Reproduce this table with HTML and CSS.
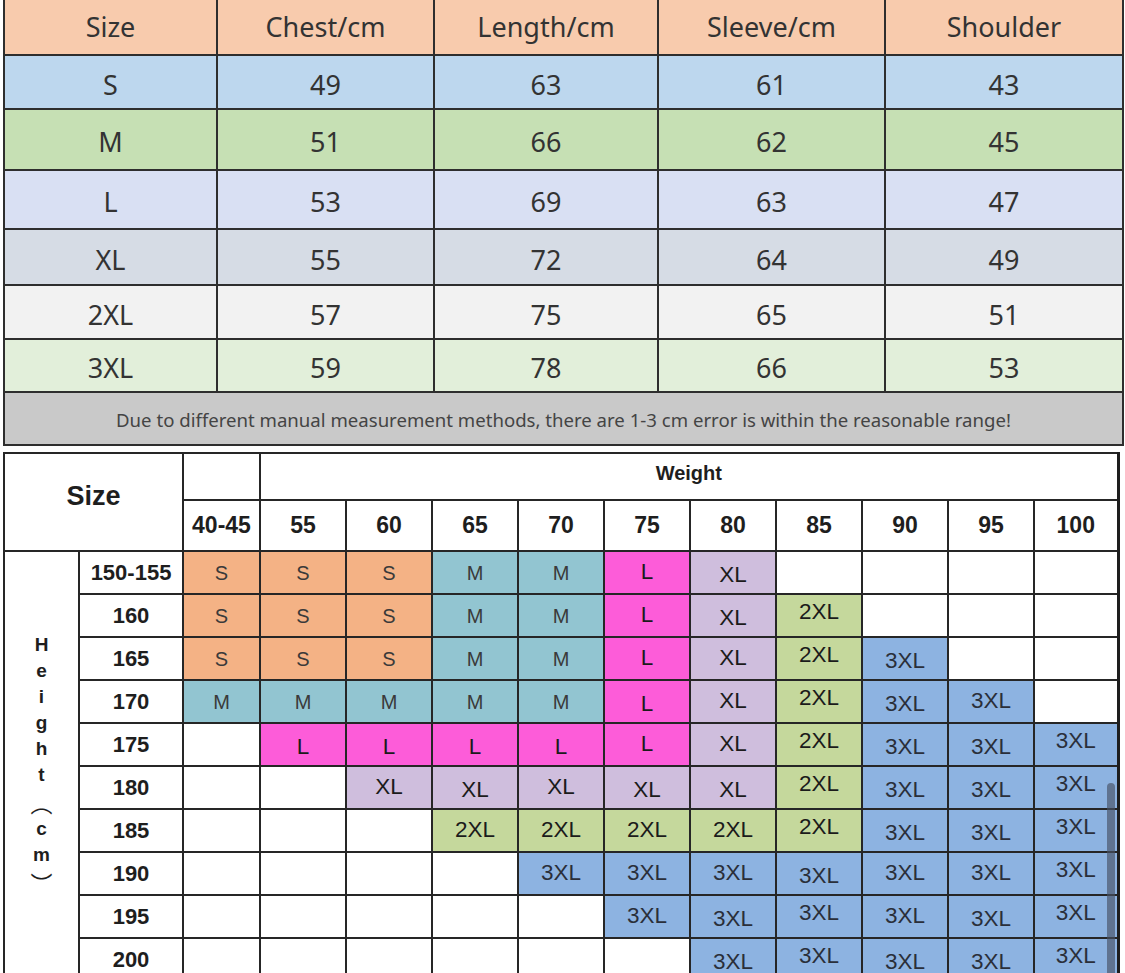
FILE: index.html
```html
<!DOCTYPE html>
<html lang="en">
<head>
<meta charset="utf-8">
<title>Size chart</title>
<link rel="stylesheet" href="styles.css">
</head>
<body>
<div class="page">
  <table class="spec">
    <colgroup>
      <col class="sc1"><col class="sc2"><col class="sc3"><col class="sc4"><col class="sc5">
    </colgroup>
    <tr class="row-head"><th>Size</th><th>Chest/cm</th><th>Length/cm</th><th>Sleeve/cm</th><th>Shoulder</th></tr>
    <tr class="row-s"><td>S</td><td>49</td><td>63</td><td>61</td><td>43</td></tr>
    <tr class="row-m"><td>M</td><td>51</td><td>66</td><td>62</td><td>45</td></tr>
    <tr class="row-l"><td>L</td><td>53</td><td>69</td><td>63</td><td>47</td></tr>
    <tr class="row-xl"><td>XL</td><td>55</td><td>72</td><td>64</td><td>49</td></tr>
    <tr class="row-2xl"><td>2XL</td><td>57</td><td>75</td><td>65</td><td>51</td></tr>
    <tr class="row-3xl"><td>3XL</td><td>59</td><td>78</td><td>66</td><td>53</td></tr>
    <tr class="row-note"><td colspan="5">Due to different manual measurement methods, there are 1-3 cm error is within the reasonable range!</td></tr>
  </table>

  <table class="chart">
    <colgroup>
      <col class="cc-h"><col class="cc-v"><col class="cc-first">
      <col class="cc-w"><col class="cc-w"><col class="cc-w"><col class="cc-w"><col class="cc-w">
      <col class="cc-w"><col class="cc-w"><col class="cc-w"><col class="cc-w"><col class="cc-last">
    </colgroup>
    <tr class="head1">
      <th class="size-title" colspan="2" rowspan="2">Size</th>
      <th></th>
      <th class="weight-title" colspan="10">Weight</th>
    </tr>
    <tr class="head2">
      <th>40-45</th><th>55</th><th>60</th><th>65</th><th>70</th><th>75</th><th>80</th><th>85</th><th>90</th><th>95</th><th>100</th>
    </tr>
    <tr>
      <td class="height-label" rowspan="10">
        <div class="vlabel"><span>H</span><span>e</span><span>i</span><span>g</span><span>h</span><span>t</span><span class="paren">︵</span><span>c</span><span>m</span><span class="paren">︶</span></div>
      </td>
      <th class="hv">150-155</th>
      <td class="s">S</td><td class="s">S</td><td class="s">S</td><td class="m">M</td><td class="m">M</td><td class="l">L</td><td class="xl lo">XL</td><td></td><td></td><td></td><td></td>
    </tr>
    <tr>
      <th class="hv">160</th>
      <td class="s">S</td><td class="s">S</td><td class="s">S</td><td class="m">M</td><td class="m">M</td><td class="l">L</td><td class="xl lo">XL</td><td class="x2 hi">2XL</td><td></td><td></td><td></td>
    </tr>
    <tr>
      <th class="hv">165</th>
      <td class="s">S</td><td class="s">S</td><td class="s">S</td><td class="m">M</td><td class="m">M</td><td class="l">L</td><td class="xl">XL</td><td class="x2 hi">2XL</td><td class="x3 lo">3XL</td><td></td><td></td>
    </tr>
    <tr>
      <th class="hv">170</th>
      <td class="m">M</td><td class="m">M</td><td class="m">M</td><td class="m">M</td><td class="m">M</td><td class="l lo">L</td><td class="xl">XL</td><td class="x2 hi">2XL</td><td class="x3 lo">3XL</td><td class="x3">3XL</td><td></td>
    </tr>
    <tr>
      <th class="hv">175</th>
      <td></td><td class="l lo">L</td><td class="l lo">L</td><td class="l lo">L</td><td class="l lo">L</td><td class="l">L</td><td class="xl">XL</td><td class="x2 hi">2XL</td><td class="x3 lo">3XL</td><td class="x3 lo">3XL</td><td class="x3 hi">3XL</td>
    </tr>
    <tr>
      <th class="hv">180</th>
      <td></td><td></td><td class="xl">XL</td><td class="xl lo">XL</td><td class="xl">XL</td><td class="xl lo">XL</td><td class="xl lo">XL</td><td class="x2 hi">2XL</td><td class="x3 lo">3XL</td><td class="x3 lo">3XL</td><td class="x3 hi">3XL</td>
    </tr>
    <tr>
      <th class="hv">185</th>
      <td></td><td></td><td></td><td class="x2">2XL</td><td class="x2">2XL</td><td class="x2">2XL</td><td class="x2">2XL</td><td class="x2 hi">2XL</td><td class="x3 lo">3XL</td><td class="x3 lo">3XL</td><td class="x3 hi">3XL</td>
    </tr>
    <tr>
      <th class="hv">190</th>
      <td></td><td></td><td></td><td></td><td class="x3">3XL</td><td class="x3">3XL</td><td class="x3">3XL</td><td class="x3 lo">3XL</td><td class="x3">3XL</td><td class="x3">3XL</td><td class="x3 hi">3XL</td>
    </tr>
    <tr>
      <th class="hv">195</th>
      <td></td><td></td><td></td><td></td><td></td><td class="x3">3XL</td><td class="x3 lo">3XL</td><td class="x3 hi">3XL</td><td class="x3">3XL</td><td class="x3 lo">3XL</td><td class="x3 hi">3XL</td>
    </tr>
    <tr>
      <th class="hv">200</th>
      <td></td><td></td><td></td><td></td><td></td><td></td><td class="x3 lo">3XL</td><td class="x3 hi">3XL</td><td class="x3 lo">3XL</td><td class="x3 lo">3XL</td><td class="x3 hi">3XL</td>
    </tr>
  </table>

  <div class="scroll-thumb"></div>
</div>
</body>
</html>
```

FILE: styles.css
```css
html, body {
  margin: 0;
  padding: 0;
  background: #ffffff;
}

.page {
  position: relative;
  width: 1125px;
  height: 973px;
  overflow: hidden;
}

/* ---------- upper measurement table ---------- */
.spec {
  margin-left: 3px;
  width: 1119px;
  table-layout: fixed;
  border-collapse: collapse;
  font-family: "Noto Sans", "Open Sans", sans-serif;
  font-weight: 400;
  color: #333333;
  font-size: 27px;
  border-left: 2px solid #2e2e2e;
  border-right: 2px solid #2e2e2e;
  border-bottom: 2px solid #2e2e2e;
}

.sc1 { width: 213px; }
.sc2 { width: 217px; }
.sc3 { width: 224px; }
.sc4 { width: 227px; }
.sc5 { width: 238px; }

.spec th,
.spec td {
  font-weight: 400;
  text-align: center;
  vertical-align: middle;
  padding: 4px 0 0 0;
  border: 2px solid #2e2e2e;
  line-height: 1;
}

.spec .row-head th {
  border-top: none;
  padding: 0 0 2px 0;
}

.row-head { height: 55px; background: #f8cbad; }
.row-s    { height: 54px; background: #bdd7ee; }
.row-m    { height: 61px; background: #c6e0b4; }
.row-l    { height: 59px; background: #d9e0f3; }
.row-xl   { height: 56px; background: #d6dce5; }
.row-2xl  { height: 54px; background: #f2f2f2; }
.row-3xl  { height: 53px; background: #e2efda; }
.row-note { height: 53px; background: #c9c9c9; }

.spec .row-note td {
  font-size: 18.6px;
  color: #444444;
  padding: 4px 0 0 0;
}

/* ---------- lower size chart ---------- */
.chart {
  margin-top: 6px;
  margin-left: 3px;
  width: 1116px;
  table-layout: fixed;
  border-collapse: collapse;
  font-family: "Liberation Sans", Arial, sans-serif;
  color: #1e1e1e;
  border: 2px solid #1e1e1e;
  border-right-width: 3px;
}

.cc-h { width: 75px; }
.cc-v { width: 104px; }
.cc-first { width: 77px; }
.cc-w { width: 86px; }
.cc-last { width: 84px; }

.chart th,
.chart td {
  border: 2px solid #262626;
  text-align: center;
  vertical-align: middle;
  padding: 0;
  line-height: 1;
}

.chart tr { height: 43px; }
.chart .head1 { height: 47px; }
.chart .head2 { height: 51px; }

.chart .size-title {
  font-size: 27px;
  font-weight: 700;
  padding-bottom: 12px;
}

.chart .weight-title {
  font-size: 20px;
  font-weight: 700;
  padding-bottom: 8px;
}

.head2 th {
  font-size: 23px;
  font-weight: 700;
}

.hv {
  font-size: 22px;
  font-weight: 700;
}

.chart .height-label {
  vertical-align: top;
  padding-top: 80px;
}

.vlabel {
  display: flex;
  flex-direction: column;
  align-items: center;
  font-size: 19px;
  font-weight: 700;
  line-height: 26px;
  color: #1e1e1e;
}

.vlabel .paren {
  font-family: "Noto Sans CJK SC", sans-serif;
  font-size: 22px;
  font-weight: 400;
  line-height: 28px;
}

.chart td.s,
.chart td.m {
  font-size: 20px;
  color: #3a3a3a;
}

.chart td.l,
.chart td.xl,
.chart td.x2,
.chart td.x3 {
  font-size: 22.5px;
  color: #1b1b1b;
}

.chart td.x3 { color: #2a2f3a; }

.s  { background: #f4b285; }
.m  { background: #92c5d1; }
.l  { background: #fd5cd9; }
.xl { background: #cfbedd; }
.x2 { background: #c5d89c; }
.x3 { background: #8db3e1; }

.chart td.lo { padding-top: 6px; }
.chart td.hi { padding-bottom: 6px; }

.scroll-thumb {
  position: absolute;
  left: 1107px;
  top: 783px;
  width: 8px;
  height: 200px;
  border-radius: 4px;
  background: rgba(70, 82, 100, 0.65);
}
```
